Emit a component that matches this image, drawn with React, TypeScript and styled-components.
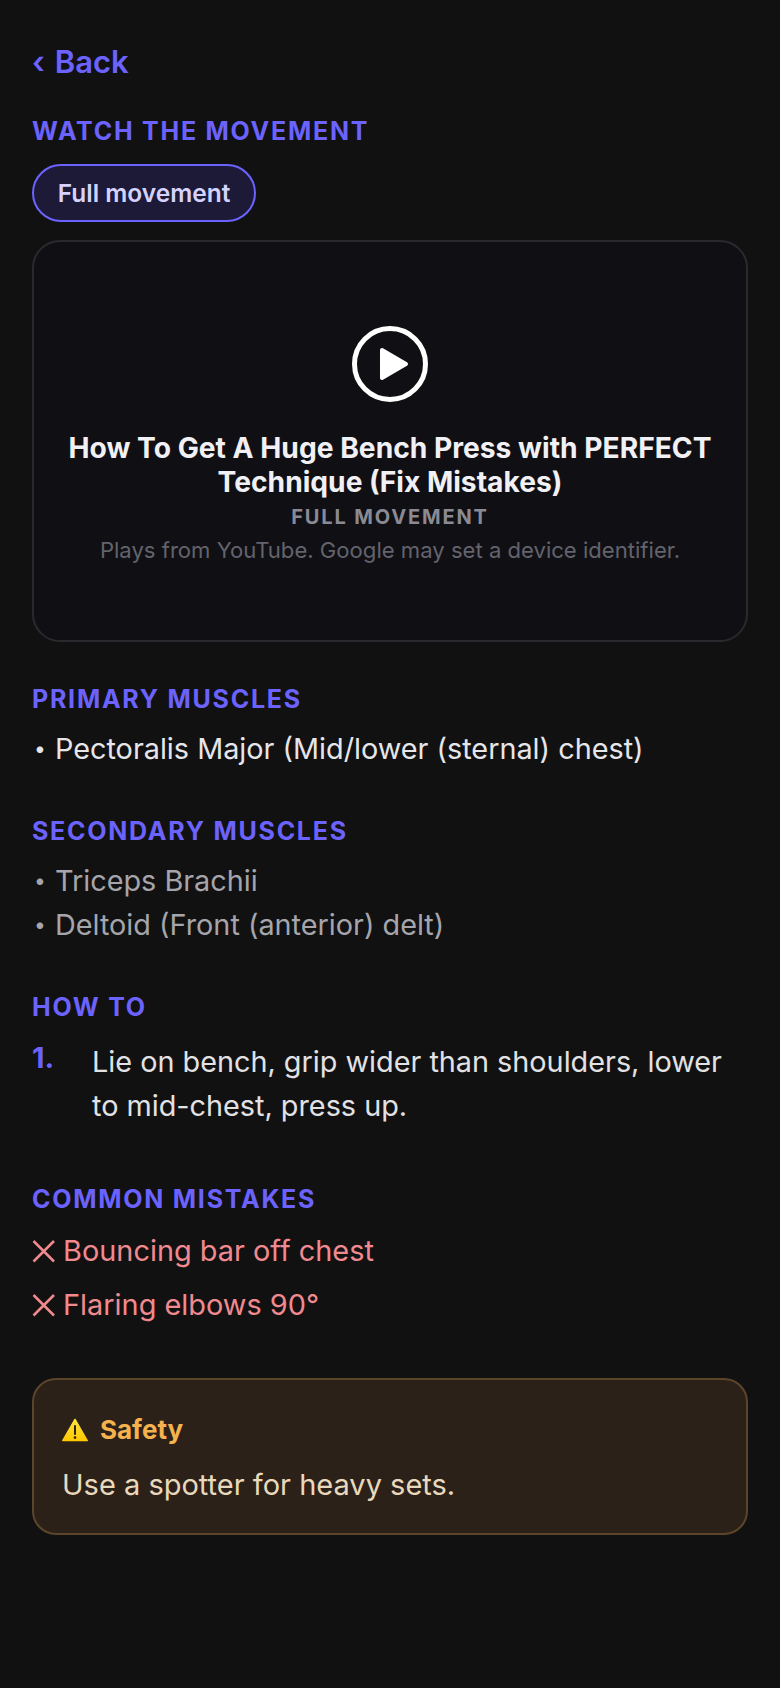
import styled, { createGlobalStyle } from 'styled-components';

const GlobalStyle = createGlobalStyle`
  html, body {
    margin: 0;
    background: #111112;
  }
  body {
    font-family: Inter, "Noto Sans", sans-serif;
    -webkit-font-smoothing: antialiased;
  }
  * {
    box-sizing: border-box;
  }
`;

const Page = styled.div`
  min-height: 1688px;
  padding: 40px 32px 0;
  display: flex;
  flex-direction: column;
  background: #111112;
`;

const BackLink = styled.a`
  color: #6c63ff;
  font-size: 31px;
  font-weight: 600;
  line-height: 44px;
  margin-bottom: 31px;

  span {
    margin-right: 2px;
  }
`;

const Section = styled.section<{ $gap?: number }>`
  margin-bottom: ${(p) => p.$gap ?? 0}px;
`;

const Heading = styled.h2`
  margin: 0;
  color: #6c63ff;
  font-size: 25px;
  font-weight: 700;
  line-height: 32px;
  letter-spacing: 1.75px;
  text-transform: uppercase;
`;

const Pill = styled.button`
  display: block;
  margin: 17px 0 18px;
  height: 58px;
  width: 224px;
  padding: 0;
  border: 2px solid #6c63ff;
  border-radius: 29px;
  background: #1c1a36;
  color: #d6d2ff;
  font-family: inherit;
  font-size: 24.5px;
  font-weight: 600;
`;

const VideoCard = styled.div`
  height: 402px;
  border: 2px solid #29292e;
  border-radius: 28px;
  background: #101014;
  padding: 83px 30px 0;
  display: flex;
  flex-direction: column;
  align-items: center;
  text-align: center;
  margin-bottom: 41px;
`;

const PlayIcon = styled.svg`
  width: 78px;
  height: 78px;
  margin-bottom: 28px;
`;

const VideoTitle = styled.div`
  color: #f0f0f5;
  font-size: 28.2px;
  font-weight: 700;
  line-height: 34px;
`;

const VideoKicker = styled.div`
  color: #8a8a94;
  font-size: 20px;
  font-weight: 700;
  letter-spacing: 1.85px;
  line-height: 28px;
  margin-top: 4px;
  text-transform: uppercase;
`;

const VideoNote = styled.div`
  color: #63636d;
  font-size: 22.1px;
  line-height: 30px;
  margin-top: 4px;
`;

const MuscleList = styled.ul<{ $secondary?: boolean }>`
  list-style: none;
  margin: 12px 0 0;
  padding: 0;
  color: ${(p) => (p.$secondary ? '#a5a5ab' : '#e6e6ea')};
  font-size: 28.8px;
  line-height: 44px;

  li {
    display: flex;
  }

  li::before {
    content: '•';
    width: 21px;
    flex: none;
    font-size: 21px;
    padding-left: 2px;
  }
`;

const StepRow = styled.div`
  display: flex;
  margin-top: 17px;
`;

const StepNumber = styled.span`
  width: 60px;
  flex: none;
  color: #6c63ff;
  font-size: 29px;
  font-weight: 700;
  line-height: 36px;
`;

const StepText = styled.p`
  margin: 0;
  color: #e2e2e5;
  font-size: 28.8px;
  line-height: 44px;
`;

const MistakeList = styled.div`
  display: flex;
  flex-direction: column;
  gap: 10px;
  margin-top: 14px;
`;

const Mistake = styled.div`
  display: flex;
  align-items: center;
  gap: 7px;
  color: #f08a8f;
  font-size: 28.9px;
  line-height: 44px;
`;

const CrossIcon = styled.svg`
  width: 24px;
  height: 24px;
  flex: none;
`;

const SafetyBox = styled.div`
  border: 2px solid #5d452a;
  border-radius: 24px;
  background: #2c2119;
  padding: 30px 28px;
  height: 157px;
`;

const SafetyTitle = styled.div`
  display: flex;
  align-items: center;
  gap: 12px;
  color: #f5b34d;
  font-size: 26px;
  font-weight: 700;
  line-height: 40px;
`;

const WarnIcon = styled.svg`
  width: 26px;
  height: 24px;
  flex: none;
`;

const SafetyText = styled.p`
  margin: 13px 0 0;
  color: #e9d9bc;
  font-size: 29px;
  line-height: 44px;
`;

const Cross = () => (
  <CrossIcon viewBox="0 0 24 24" fill="none" stroke="#f08a8f" strokeWidth="2.5">
    <path d="M1.5 2 L22 22.5 M22 2 L1.5 22.5" />
  </CrossIcon>
);

export default function App() {
  return (
    <>
      <GlobalStyle />
      <Page>
        <BackLink>
          <span>‹</span> Back
        </BackLink>

        <Section>
          <Heading>Watch the movement</Heading>
          <Pill>Full movement</Pill>
          <VideoCard>
            <PlayIcon viewBox="0 0 78 78">
              <circle cx="39" cy="39" r="35.5" fill="none" stroke="#fff" strokeWidth="5" />
              <path
                d="M31 25 L55 39 L31 53 Z"
                fill="#fff"
                stroke="#fff"
                strokeWidth="4"
                strokeLinejoin="round"
              />
            </PlayIcon>
            <VideoTitle>How To Get A Huge Bench Press with PERFECT Technique (Fix Mistakes)</VideoTitle>
            <VideoKicker>Full movement</VideoKicker>
            <VideoNote>Plays from YouTube. Google may set a device identifier.</VideoNote>
          </VideoCard>
        </Section>

        <Section $gap={44}>
          <Heading>Primary muscles</Heading>
          <MuscleList>
            <li>Pectoralis Major (Mid/lower (sternal) chest)</li>
          </MuscleList>
        </Section>

        <Section $gap={44}>
          <Heading>Secondary muscles</Heading>
          <MuscleList $secondary>
            <li>Triceps Brachii</li>
            <li>Deltoid (Front (anterior) delt)</li>
          </MuscleList>
        </Section>

        <Section $gap={55}>
          <Heading>How to</Heading>
          <StepRow>
            <StepNumber>1.</StepNumber>
            <StepText>Lie on bench, grip wider than shoulders, lower to mid-chest, press up.</StepText>
          </StepRow>
        </Section>

        <Section $gap={51}>
          <Heading>Common mistakes</Heading>
          <MistakeList>
            <Mistake>
              <Cross />
              Bouncing bar off chest
            </Mistake>
            <Mistake>
              <Cross />
              Flaring elbows 90°
            </Mistake>
          </MistakeList>
        </Section>

        <SafetyBox>
          <SafetyTitle>
            <WarnIcon viewBox="0 0 26 24">
              <defs>
                <linearGradient id="warn" x1="0" y1="0" x2="0" y2="1">
                  <stop offset="0" stopColor="#ffe23d" />
                  <stop offset="1" stopColor="#ffc800" />
                </linearGradient>
              </defs>
              <path
                d="M13 1.5 L25.2 22.6 L0.8 22.6 Z"
                fill="url(#warn)"
                stroke="url(#warn)"
                strokeWidth="1.5"
                strokeLinejoin="round"
              />
              <path d="M13 8 V16" stroke="#2c2119" strokeWidth="2" strokeLinecap="round" />
              <circle cx="13" cy="19.6" r="1.3" fill="#2c2119" />
            </WarnIcon>
            Safety
          </SafetyTitle>
          <SafetyText>Use a spotter for heavy sets.</SafetyText>
        </SafetyBox>
      </Page>
    </>
  );
}
